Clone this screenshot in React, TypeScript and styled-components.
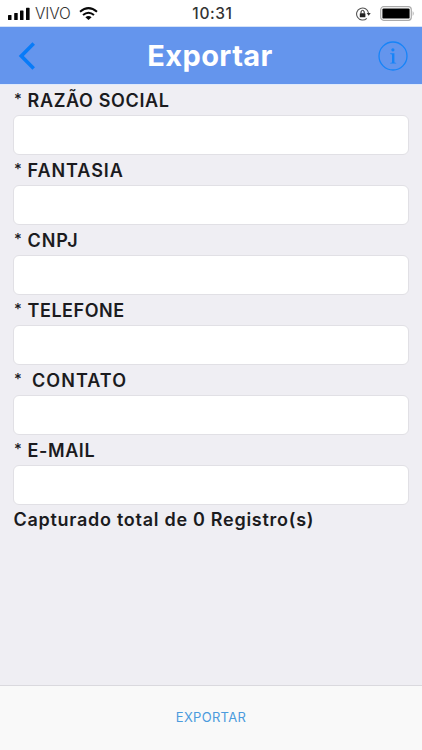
import React from "react";
import styled, { createGlobalStyle } from "styled-components";

const GlobalStyle = createGlobalStyle`
  * { box-sizing: border-box; }
  body { margin: 0; background: #efeef3; font-family: Inter, "Liberation Sans", sans-serif; }
`;

const Screen = styled.div`
  display: flex;
  flex-direction: column;
  width: 100%;
  height: 750px;
  background: #efeef3;
  overflow: hidden;
`;

const StatusBar = styled.div`
  display: grid;
  grid-template-columns: 1fr auto 1fr;
  align-items: center;
  height: 27px;
  padding: 1px 7px 0 8px;
  background: #fff;
  border-bottom: 1px solid #d5e3f9;
  flex: none;
`;

const StatusGroup = styled.div<{ $end?: boolean }>`
  display: flex;
  align-items: center;
  gap: ${(p) => (p.$end ? 9 : 0)}px;
  justify-content: ${(p) => (p.$end ? "flex-end" : "flex-start")};
  svg { display: block; flex: none; }
`;

const Carrier = styled.span`
  margin: 0 8px 0 5px;
  padding-top: 1px;
  font-size: 15.5px;
  line-height: 18px;
  font-weight: 300;
  letter-spacing: -0.1px;
  color: #333;
`;

const Clock = styled.span`
  padding-left: 2px;
  font-size: 15.5px;
  line-height: 18px;
  font-weight: 500;
  letter-spacing: 0.6px;
  color: #333;
`;

const NavBar = styled.header`
  display: grid;
  grid-template-columns: 60px 1fr 60px;
  align-items: center;
  height: 58px;
  background: #6495ed;
  border-bottom: 1px solid #dfeafc;
  flex: none;
`;

const NavButton = styled.button<{ $end?: boolean }>`
  display: flex;
  justify-content: ${(p) => (p.$end ? "flex-end" : "flex-start")};
  padding: ${(p) => (p.$end ? "0 14px 0 0" : "0 0 0 18px")};
  border: 0;
  background: none;
  svg { display: block; }
`;

const Title = styled.h1`
  margin: 0;
  padding: 0 2px 0 0;
  text-align: center;
  font-size: 29px;
  line-height: 40px;
  font-weight: 700;
  letter-spacing: 0.4px;
  color: #fff;
`;

const Form = styled.main`
  flex: 1;
  padding: 0 13px;
`;

const Text = styled.span<{ $spacing: number }>`
  display: block;
  height: 30px;
  padding-top: 1px;
  line-height: 30px;
  font-size: 18px;
  font-weight: 600;
  letter-spacing: ${(p) => p.$spacing}px;
  white-space: pre;
  color: #1b1b1e;
`;

const Label = styled.label`
  display: flex;
  flex-wrap: wrap;
`;

const Star = styled.span<{ $gap: number }>`
  width: ${(p) => p.$gap}px;
  height: 30px;
  padding-left: 1px;
  line-height: 28px;
  font-size: 15px;
  font-weight: 500;
  color: #1b1b1e;
`;

const Input = styled.input`
  display: block;
  width: 100%;
  height: 40px;
  padding: 0 10px;
  border: 1px solid #e1e0e5;
  border-radius: 6px;
  background: #fff;
  font: inherit;
  outline: none;
`;

const Total = styled(Text)`
  padding: 0 0 0 0.5px;
`;

const Footer = styled.footer`
  display: flex;
  align-items: center;
  justify-content: center;
  height: 65px;
  padding-bottom: 2px;
  border-top: 1px solid #dad9de;
  background: #f9f9f9;
  flex: none;
`;

const ExportButton = styled.button`
  padding: 0;
  border: 0;
  background: none;
  font: 400 13px/18px Inter, "Liberation Sans", sans-serif;
  letter-spacing: 0.3px;
  color: #4b9bdd;
`;

const SignalIcon = () => (
  <svg width="22" height="14" viewBox="0 0 22 14" fill="#050505">
    <rect x="0" y="8" width="3.5" height="5" rx="0.6" />
    <rect x="6.2" y="6" width="3.5" height="7" rx="0.6" />
    <rect x="12" y="3.5" width="3.5" height="9.5" rx="0.6" />
    <rect x="18" y="0.8" width="3.6" height="12.2" rx="0.6" />
  </svg>
);

const WifiIcon = () => (
  <svg width="19" height="14" viewBox="0 0 19 14" fill="none" stroke="#080808" strokeWidth="2">
    <path d="M1 4.7Q9.5 -2.4 18 4.7" />
    <path d="M4 8Q9.5 3.4 15 8" />
    <path d="M6.4 10.2Q9.5 7.8 12.6 10.2L9.5 13Z" fill="#080808" stroke="none" />
  </svg>
);

const RotationLockIcon = () => (
  <svg width="15" height="14" viewBox="0 0 15 14" fill="none">
    <path d="M12.5 6A6 6 0 1 0 10.8 11.3" stroke="#555" strokeWidth="1.1" />
    <path d="M10.7 6h4l-2 2.8z" fill="#333" />
    <rect x="3.8" y="6.2" width="5.6" height="4.1" rx="0.5" fill="#222" />
    <path d="M5 6.5V5a1.6 1.6 0 0 1 3.2 0v1.5" stroke="#222" />
  </svg>
);

const BatteryIcon = () => (
  <svg width="35" height="15" viewBox="0 0 35 15">
    <rect x="0.7" y="0.7" width="30.6" height="13.6" rx="3" fill="#fff" stroke="#aaa" strokeWidth="1.2" />
    <rect x="2.4" y="2.4" width="27.2" height="10.2" rx="1.2" fill="#000" />
    <path d="M32.7 5q2 2.5 0 5z" fill="#aaa" />
  </svg>
);

const BackIcon = () => (
  <svg width="18" height="28" viewBox="0 0 18 28" fill="none" stroke="#087bf8" strokeWidth="3.6">
    <path d="M15.7 1.5L3.3 14L15.7 26.5" />
  </svg>
);

const InfoIcon = () => (
  <svg width="30" height="30" viewBox="0 0 30 30" fill="none">
    <circle cx="15" cy="15" r="14" stroke="#1684f8" strokeWidth="1.3" />
    <circle cx="14.9" cy="8.8" r="1.6" fill="#1684f8" />
    <path d="M12.2 12.3h4.2v9.1l1.8.5v.7h-6v-.7l1.8-.5v-7.9l-1.8-.5z" fill="#1684f8" />
  </svg>
);

const fields = [
  { name: "RAZÃO SOCIAL", gap: 14.5, spacing: 0.65 },
  { name: "FANTASIA", gap: 14.5, spacing: 0.95 },
  { name: "CNPJ", gap: 14.5, spacing: 0.95 },
  { name: "TELEFONE", gap: 14.5, spacing: 0.55 },
  { name: "CONTATO", gap: 19, spacing: 1.05 },
  { name: "E-MAIL", gap: 14.5, spacing: 0.6 },
];

export default function App() {
  return (
    <Screen>
      <GlobalStyle />
      <StatusBar>
        <StatusGroup>
          <SignalIcon />
          <Carrier>VIVO</Carrier>
          <WifiIcon />
        </StatusGroup>
        <Clock>10:31</Clock>
        <StatusGroup $end>
          <RotationLockIcon />
          <BatteryIcon />
        </StatusGroup>
      </StatusBar>
      <NavBar>
        <NavButton aria-label="Voltar"><BackIcon /></NavButton>
        <Title>Exportar</Title>
        <NavButton $end aria-label="Informações"><InfoIcon /></NavButton>
      </NavBar>
      <Form>
        {fields.map((f) => (
          <Label key={f.name}>
            <Star $gap={f.gap}>*</Star>
            <Text $spacing={f.spacing}>{f.name}</Text>
            <Input type="text" />
          </Label>
        ))}
        <Total $spacing={0.72}>Capturado total de 0 Registro(s)</Total>
      </Form>
      <Footer>
        <ExportButton>EXPORTAR</ExportButton>
      </Footer>
    </Screen>
  );
}
